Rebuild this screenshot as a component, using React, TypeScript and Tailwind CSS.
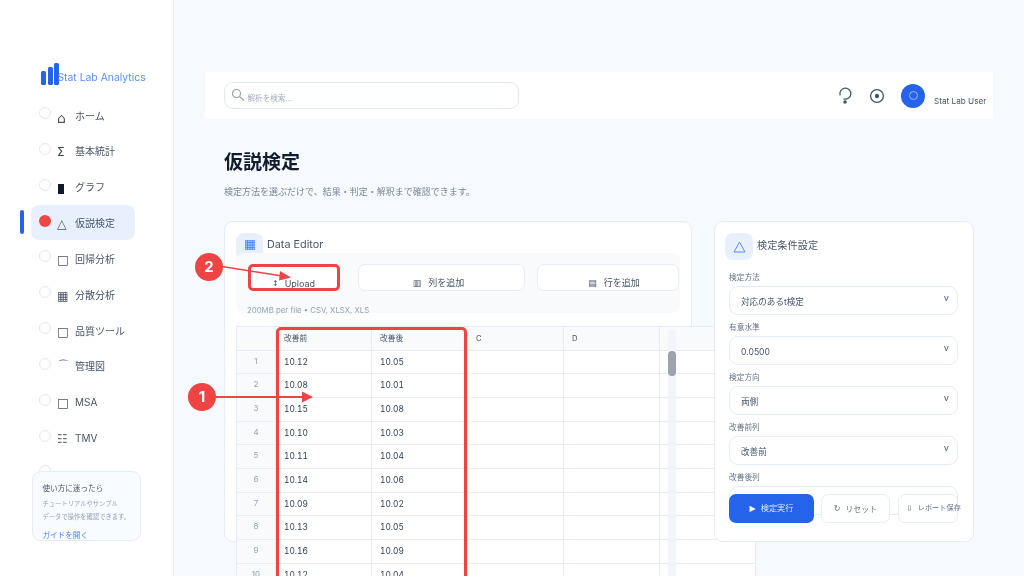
import React from "react";

const navItems: { icon: string; label: string; iconClass: string }[] = [
  { icon: "⌂", label: "ホーム", iconClass: "text-[14px] pt-[12px]" },
  { icon: "Σ", label: "基本統計", iconClass: "text-[12px] pt-[11px] text-[#374151]" },
  { icon: "", label: "グラフ", iconClass: "" },
  { icon: "△", label: "仮説検定", iconClass: "text-[12.5px] pt-[11px]" },
  { icon: "□", label: "回帰分析", iconClass: "text-[12.5px] pt-[11px]" },
  { icon: "▦", label: "分散分析", iconClass: "text-[12px] pt-[11px]" },
  { icon: "□", label: "品質ツール", iconClass: "text-[12.5px] pt-[11px]" },
  { icon: "⌒", label: "管理図", iconClass: "text-[13px] pt-[10px]" },
  { icon: "□", label: "MSA", iconClass: "text-[12.5px] pt-[11px]" },
  { icon: "☷", label: "TMV", iconClass: "text-[12px] pt-[11px] text-[#6b7280]" },
  { icon: "", label: "", iconClass: "" },
];

const rows = [
  ["10.12", "10.05"],
  ["10.08", "10.01"],
  ["10.15", "10.08"],
  ["10.10", "10.03"],
  ["10.11", "10.04"],
  ["10.14", "10.06"],
  ["10.09", "10.02"],
  ["10.13", "10.05"],
  ["10.16", "10.09"],
  ["10.12", "10.04"],
];

const fields = [
  { label: "検定方法", value: "対応のあるt検定" },
  { label: "有意水準", value: "0.0500" },
  { label: "検定方向", value: "両側" },
  { label: "改善前列", value: "改善前" },
  { label: "改善後列", value: "" },
];

function Cell({ children, head }: { children?: React.ReactNode; head?: boolean }) {
  return (
    <div className={`w-[96px] shrink-0 border-r border-[#e6ebf3] pl-[8px] flex items-center tabular-nums ${head ? "text-[7.7px] text-[#475569]" : "text-[8.4px] text-[#334155]"}`}>
      {children}
    </div>
  );
}

export default function App() {
  return (
    <div className="relative w-[1024px] h-[576px] overflow-hidden flex bg-[#f6f9fd] font-[Inter,'Noto_Sans_CJK_JP',sans-serif] text-[#334155] blur-[0.4px]">
      {/* Sidebar */}
      <aside className="w-[174px] shrink-0 h-full bg-white border-r border-[#e9eef6] flex flex-col">
        <div className="h-[97.5px] shrink-0 pt-[63px] pl-[41px] flex items-start">
          <div className="flex items-end gap-[1.6px] h-[22px]">
            <span className="w-[5px] h-[14.5px] rounded-[1.5px] bg-[#2563eb]" />
            <span className="w-[5px] h-[18.5px] rounded-[1.5px] bg-[#2563eb]" />
            <span className="w-[5px] h-[22px] rounded-[1.5px] bg-[#2563eb]" />
          </div>
          <span className="-ml-[1.8px] mt-[8px] text-[10.4px] leading-[13px] text-[#5b8ff6] whitespace-nowrap">Stat Lab Analytics</span>
        </div>
        <nav className="h-[373.5px] shrink-0 overflow-hidden">
          {navItems.map((item, i) => {
            const active = i === 3;
            return (
              <div key={i} className="relative h-[35.85px] ml-[31px] w-[104px]">
                {active && <span className="absolute -left-[11px] top-[5px] w-[4px] h-[24px] rounded-full bg-[#2563eb]" />}
                <div className={`h-[35px] rounded-[8px] pl-[8px] flex items-start ${active ? "bg-[#e9f0fd]" : ""}`}>
                  <span className={`mt-[9.5px] w-[12px] h-[12px] rounded-full shrink-0 ${active ? "bg-[#ef4444]" : "bg-white border border-[#e2e8f0]"}`} />
                  {i === 2 ? (
                    <span className="ml-[6.5px] mr-[11px] mt-[15px] w-[6.5px] h-[10px] shrink-0 bg-[#111827]" />
                  ) : (
                    <span className={`ml-[6px] w-[18px] h-[35px] leading-[16px] shrink-0 font-['DejaVu_Sans',sans-serif] text-[#4b5563] ${item.iconClass}`}>{item.icon}</span>
                  )}
                  <span className="h-[35px] leading-[37px] text-[10px] text-[#475569] whitespace-nowrap">{item.label}</span>
                </div>
              </div>
            );
          })}
        </nav>
        <div className="ml-[32px] w-[109px] h-[70px] rounded-[9px] border border-[#e6ecf6] bg-[#f8fbff] pl-[9.5px] pt-[11px] overflow-visible">
          <p className="text-[7.6px] leading-[12px] text-[#475569] whitespace-nowrap">使い方に迷ったら</p>
          <p className="mt-[3px] text-[6.3px] leading-[13px] text-[#94a3b8] whitespace-nowrap">チュートリアルやサンプル<br />データで操作を確認できます。</p>
          <p className="mt-[6px] text-[7.6px] leading-[12px] text-[#4d86f5] whitespace-nowrap">ガイドを開く</p>
        </div>
      </aside>

      {/* Main */}
      <main className="flex-1 min-w-0 pl-[31px] pt-[72px]">
        <header className="w-[788px] h-[47px] bg-white flex items-center pl-[19px]">
          <div className="w-[295px] h-[27px] rounded-[9px] border border-[#e2e8f0] bg-white flex items-start pl-[5.5px] pt-[4.5px]">
            <svg width="14" height="14" viewBox="0 0 14 14" fill="none" stroke="#94a3b8" strokeWidth="1.2">
              <circle cx="5.5" cy="5.5" r="4" />
              <path d="M8.5 8.5 L13 12.5" />
            </svg>
            <span className="ml-[3px] mt-[6.5px] text-[7.6px] leading-[10px] text-[#a3aebd]">解析を検索...</span>
          </div>
          <svg className="ml-[318px]" width="16" height="20" viewBox="0 0 16 20" fill="none" stroke="#475569" strokeWidth="1.3">
            <path d="M3.2 9.5 A5.5 5.5 0 1 1 6.5 12.8" />
            <circle cx="8" cy="16" r="1.8" fill="#475569" stroke="none" />
          </svg>
          <svg className="ml-[16px]" width="16" height="16" viewBox="0 0 16 16" fill="none" stroke="#475569" strokeWidth="1.3">
            <circle cx="8" cy="8" r="6.4" />
            <circle cx="8" cy="8" r="2.2" fill="#475569" stroke="none" />
          </svg>
          <div className="ml-[16px] w-[24px] h-[24px] rounded-full bg-[#2563eb] flex items-center justify-center">
            <span className="w-[9px] h-[9px] rounded-full border border-[#93b4f6]" />
          </div>
          <span className="ml-[9px] mt-[10px] text-[8.2px] leading-[12px] text-[#475569] whitespace-nowrap">Stat Lab User</span>
        </header>

        <div className="pl-[19px]">
          <h1 className="mt-[32px] text-[19px] leading-[24px] font-bold text-[#111c2e]">仮説検定</h1>
          <p className="mt-[11px] text-[9px] leading-[12px] text-[#7b8798] whitespace-nowrap">検定方法を選ぶだけで、結果・判定・解釈まで確認できます。</p>

          <div className="mt-[23px] flex items-start gap-[22px]">
            {/* Data Editor card */}
            <section className="w-[468px] h-[321px] shrink-0 rounded-[9px] border border-[#e6ecf6] bg-white pl-[11px] pt-[11px]">
              <div className="flex h-[27px]">
                <div className="w-[27px] h-[27px] rounded-[8px] bg-[#e9f0fd] flex items-start justify-center pt-[7px]">
                  <svg width="10" height="10" viewBox="0 0 10 10" fill="#a9c4fb" stroke="#4b82f5" strokeWidth="0.8">
                    <path d="M0 0H10V10H0Z" />
                    <path d="M0 2.5H10M0 5H10M0 7.5H10M2.5 0V10M5 0V10M7.5 0V10" />
                  </svg>
                </div>
                <span className="ml-[4px] h-[24px] leading-[24px] text-[10.8px] text-[#475569]">Data Editor</span>
              </div>
              <div className="relative -mt-[7px] w-[444px] h-[60px] rounded-[8px] bg-[#f8fafc] pl-[12px] pt-[11px]">
                <div className="flex">
                  <div className="w-[91px] h-[27px] rounded-[7px] bg-white flex items-end justify-center pb-[1px] text-[9px] leading-[12px] text-[#475569]">
                    <span className="mr-[6px] font-['DejaVu_Sans',sans-serif] text-[8px]">↕</span>Upload
                  </div>
                  <div className="ml-[19px] w-[167px] h-[27px] rounded-[7px] bg-white border border-[#e8edf5] flex items-end justify-center pb-[1px] pr-[6px] text-[9px] leading-[12px] text-[#475569]">
                    <span className="mr-[7px] font-['DejaVu_Sans',sans-serif] text-[9px]">▥</span>列を追加
                  </div>
                  <div className="ml-[12px] w-[142px] h-[27px] rounded-[7px] bg-white border border-[#e8edf5] flex items-end justify-center pb-[1px] pl-[12px] text-[9px] leading-[12px] text-[#475569]">
                    <span className="mr-[7px] font-['DejaVu_Sans',sans-serif] text-[9px]">▤</span>行を追加
                  </div>
                </div>
                <p className="ml-[-1px] mt-[14px] text-[7.8px] leading-[10px] text-[#94a3b8] whitespace-nowrap">200MB per file • CSV, XLSX, XLS</p>
              </div>

              {/* Table */}
              <div className="relative mt-[13px] w-[520px] bg-white border-t border-l border-[#e6ebf3]">
                <div className="flex h-[23.67px] bg-[#f8fafc] border-b border-[#e6ebf3]">
                  <div className="w-[39px] shrink-0 border-r border-[#e6ebf3]" />
                  <Cell head>改善前</Cell>
                  <Cell head>改善後</Cell>
                  <Cell head>C</Cell>
                  <Cell head>D</Cell>
                  <Cell head />
                </div>
                {rows.map((r, i) => (
                  <div key={i} className="flex h-[23.67px] border-b border-[#e9edf5]">
                    <div className="w-[39px] shrink-0 bg-[#f8fafc] border-r border-[#e6ebf3] flex items-start justify-center pt-[4px] text-[8px] leading-[12px] text-[#94a3b8]">{i + 1}</div>
                    <Cell>{r[0]}</Cell>
                    <Cell>{r[1]}</Cell>
                    <Cell />
                    <Cell />
                    <Cell />
                  </div>
                ))}
                <div className="absolute left-[431px] top-[3px] w-[8px] h-[260px] rounded-full bg-[#f1f5f9]">
                  <div className="mt-[21px] w-[8px] h-[25px] rounded-full bg-[#9ca3af]" />
                </div>
              </div>
            </section>

            {/* Settings card */}
            <section className="relative z-10 w-[260px] h-[321px] shrink-0 rounded-[9px] border border-[#e6ecf6] bg-white pl-[14px] pt-[11px]">
              <div className="flex h-[33px] -ml-[4px]">
                <div className="w-[28px] h-[27px] rounded-[8px] bg-[#e9f0fd] flex items-center justify-center">
                  <svg width="13" height="12" viewBox="0 0 13 12" fill="none" stroke="#5b8df5" strokeWidth="1">
                    <path d="M6.5 1 L12 11 H1 Z" />
                  </svg>
                </div>
                <span className="ml-[4px] h-[24px] leading-[24px] text-[10.2px] text-[#475569]">検定条件設定</span>
              </div>
              {fields.map((f) => (
                <div key={f.label} className="w-[229px] h-[50px] pt-[7px]">
                  <p className="text-[7.7px] leading-[10px] text-[#64748b]">{f.label}</p>
                  <div className="mt-[3px] h-[29px] rounded-[9px] border border-[#e6ecf6] bg-white flex items-start justify-between pl-[11px] pr-[8px]">
                    <span className="mt-[8.5px] text-[8.6px] leading-[12px] text-[#475569]">{f.value}</span>
                    {f.value && <span className="mt-[5px] text-[9px] leading-[12px] font-medium text-[#64748b]">v</span>}
                  </div>
                </div>
              ))}
              <div className="relative -mt-[22px] flex items-stretch h-[29px] w-[229px]">
                <div className="w-[85px] rounded-[7px] bg-[#2563eb] flex items-center justify-center text-[8.2px] text-[#dbe7ff]">
                  <span className="mr-[5px] font-['DejaVu_Sans',sans-serif] text-[8px] text-white">▶</span>検定実行
                </div>
                <div className="ml-[7px] w-[69px] rounded-[7px] bg-white border border-[#e6ecf6] flex items-center justify-center text-[8px] text-[#64748b]">
                  <span className="mr-[5px] font-['DejaVu_Sans',sans-serif] text-[8px]">↻</span>リセット
                </div>
                <div className="ml-[8px] w-[60px] rounded-[7px] bg-white border border-[#e6ecf6] flex items-center pl-[7px] text-[7.2px] text-[#64748b] whitespace-nowrap">
                  <span className="mr-[5px] font-['DejaVu_Sans',sans-serif] text-[8px]">⇩</span>レポート保存
                </div>
              </div>
            </section>
          </div>
        </div>
      </main>

      {/* Tutorial annotations */}
      <div className="absolute left-[276px] top-[326.5px] w-[191px] h-[300px] rounded-[5px] border-[3px] border-[#ef4444]" />
      <div className="absolute left-[247.5px] top-[264px] w-[92px] h-[27px] rounded-[5px] border-[3px] border-[#ef4444]" />
      <svg className="absolute left-0 top-0" width="1024" height="576" fill="none">
        <path d="M215 397 H303" stroke="#ef4444" strokeWidth="2" />
        <path d="M302 391.5 L313 397 L302 402.5 Z" fill="#ef4444" />
        <path d="M222 266.5 L282 276" stroke="#ef4444" strokeWidth="1.6" />
        <path d="M280 271 L291 277.5 L279 280.5 Z" fill="#ef4444" />
      </svg>
      <div className="absolute left-[188px] top-[383px] w-[28px] h-[28px] rounded-full bg-[#ef4444] flex items-center justify-center text-white text-[15px] font-bold">1</div>
      <div className="absolute left-[195px] top-[253px] w-[28px] h-[28px] rounded-full bg-[#ef4444] flex items-center justify-center text-white text-[15px] font-bold">2</div>
    </div>
  );
}
